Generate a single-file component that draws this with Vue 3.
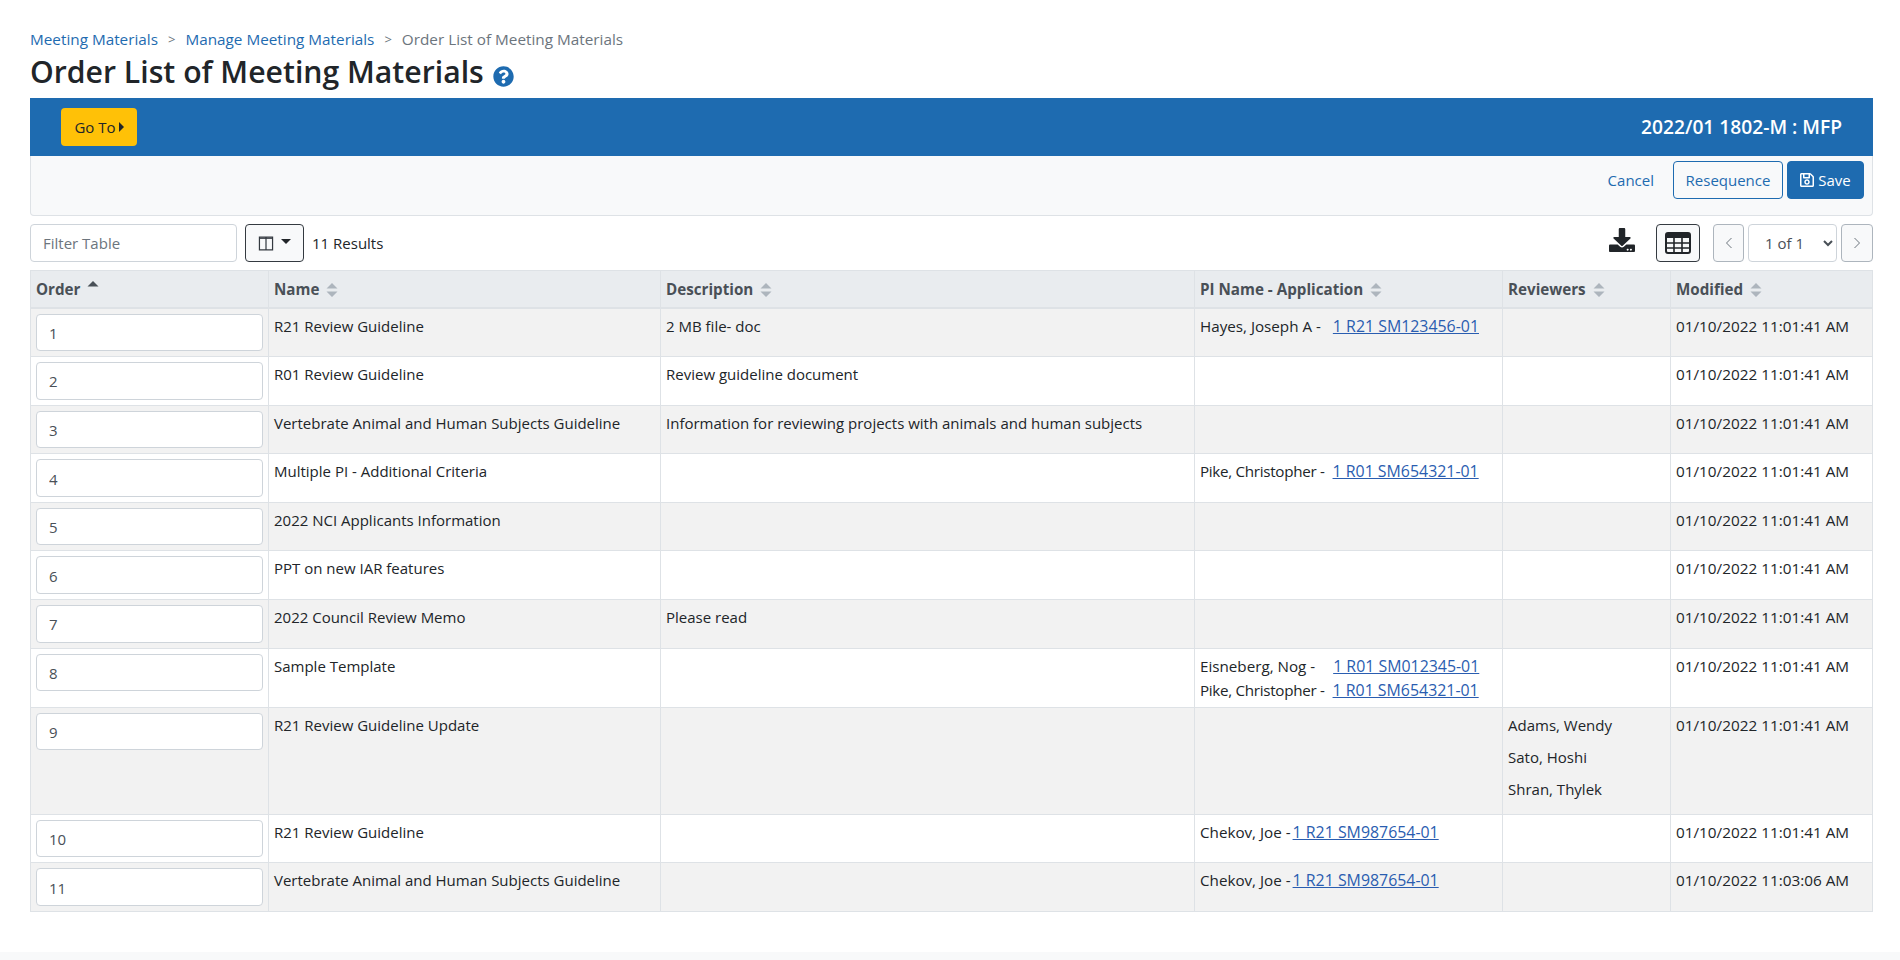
<script setup>
const columns = [
  { label: 'Order', sort: 'asc' },
  { label: 'Name' },
  { label: 'Description' },
  { label: 'PI Name - Application' },
  { label: 'Reviewers' },
  { label: 'Modified' }
]

const MOD = '01/10/2022 11:01:41 AM'

const rows = [
  { name: 'R21 Review Guideline', desc: '2 MB file- doc', pis: [{ pi: 'Hayes, Joseph A -', gap: 'wide', app: '1 R21 SM123456-01' }], modified: MOD },
  { name: 'R01 Review Guideline', desc: 'Review guideline document', modified: MOD },
  { name: 'Vertebrate Animal and Human Subjects Guideline', desc: 'Information for reviewing projects with animals and human subjects', modified: MOD },
  { name: 'Multiple PI - Additional Criteria', pis: [{ pi: 'Pike, Christopher -', gap: 'mid', app: '1 R01 SM654321-01' }], modified: MOD },
  { name: '2022 NCI Applicants Information', modified: MOD },
  { name: 'PPT on new IAR features', modified: MOD },
  { name: '2022 Council Review Memo', desc: 'Please read', modified: MOD },
  {
    name: 'Sample Template',
    pis: [
      { pi: 'Eisneberg, Nog -', gap: 'wider', app: '1 R01 SM012345-01' },
      { pi: 'Pike, Christopher -', gap: 'mid', app: '1 R01 SM654321-01' }
    ],
    modified: MOD
  },
  { name: 'R21 Review Guideline Update', reviewers: ['Adams, Wendy', 'Sato, Hoshi', 'Shran, Thylek'], modified: MOD },
  { name: 'R21 Review Guideline', pis: [{ pi: 'Chekov, Joe -', app: '1 R21 SM987654-01' }], modified: MOD },
  { name: 'Vertebrate Animal and Human Subjects Guideline', pis: [{ pi: 'Chekov, Joe -', app: '1 R21 SM987654-01' }], modified: '01/10/2022 11:03:06 AM' }
]
</script>

<template>
  <div class="page">
    <nav class="crumbs">
      <a href="#">Meeting Materials</a>
      <span class="sep">&gt;</span>
      <a href="#">Manage Meeting Materials</a>
      <span class="sep">&gt;</span>
      <span class="current">Order List of Meeting Materials</span>
    </nav>
    <h1 class="title">
      Order List of Meeting Materials
      <svg class="help" viewBox="0 0 512 512"><path fill="currentColor" d="M504 256c0 136.997-111.043 248-248 248S8 392.997 8 256C8 119.083 119.043 8 256 8s248 111.083 248 248zM262.655 90c-54.497 0-89.255 22.957-116.549 63.758-3.536 5.286-2.353 12.415 2.715 16.258l34.699 26.31c5.205 3.947 12.621 3.008 16.665-2.122 17.864-22.658 30.113-35.797 57.303-35.797 20.429 0 45.698 13.148 45.698 32.958 0 14.976-12.363 22.667-32.534 33.976C247.128 238.528 216 254.941 216 296v4c0 6.627 5.373 12 12 12h56c6.627 0 12-5.373 12-12v-1.333c0-28.462 83.186-29.647 83.186-106.667 0-58.002-60.165-102-116.531-102zM256 338c-25.365 0-46 20.635-46 46 0 25.364 20.635 46 46 46s46-20.636 46-46c0-25.365-20.635-46-46-46z"/></svg>
    </h1>

    <div class="banner">
      <button class="goto">Go To<span class="caret-right"></span></button>
      <div class="meeting">2022/01 1802-M : MFP</div>
    </div>

    <div class="actions">
      <a href="#" class="cancel">Cancel</a>
      <button class="btn-outline">Resequence</button>
      <button class="btn-save">
        <svg class="save-icon" viewBox="0 0 448 512"><path fill="currentColor" d="M433.941 129.941l-83.882-83.882A48 48 0 0 0 316.118 32H48C21.49 32 0 53.49 0 80v352c0 26.51 21.49 48 48 48h352c26.51 0 48-21.49 48-48V163.882a48 48 0 0 0-14.059-33.941zM272 80v80H144V80h128zm122 352H54a6 6 0 0 1-6-6V86a6 6 0 0 1 6-6h42v104c0 13.255 10.745 24 24 24h176c13.255 0 24-10.745 24-24V83.882l78.243 78.243a6 6 0 0 1 1.757 4.243V426a6 6 0 0 1-6 6zM224 232c-48.523 0-88 39.477-88 88s39.477 88 88 88 88-39.477 88-88-39.477-88-88-88zm0 128c-22.056 0-40-17.944-40-40s17.944-40 40-40 40 17.944 40 40-17.944 40-40 40z"/></svg>
        Save
      </button>
    </div>

    <div class="tools">
      <input class="filter" placeholder="Filter Table" />
      <button class="col-btn">
        <svg class="col-icon" viewBox="0 0 16 16"><path fill="none" stroke="currentColor" stroke-width="1.3" d="M1 1.200h14v13.600H1zM8 1.200v13.600"/><path fill="none" stroke="currentColor" stroke-width="1.300" d="M1 2.400h14"/></svg>
        <span class="caret-down"></span>
      </button>
      <span class="results">11 Results</span>
      <div class="tools-right">
        <svg class="download" viewBox="0 0 512 512" preserveAspectRatio="none"><path fill="currentColor" d="M216 0h80c13.3 0 24 10.7 24 24v168h87.7c17.8 0 26.7 21.5 14.1 34.1L269.7 378.3c-7.5 7.5-19.8 7.5-27.3 0L90.1 226.1c-12.6-12.6-3.7-34.1 14.1-34.1H192V24c0-13.3 10.7-24 24-24zm296 376v112c0 13.3-10.7 24-24 24H24c-13.3 0-24-10.7-24-24V376c0-13.3 10.7-24 24-24h146.7l49 49c20.1 20.1 52.5 20.1 72.6 0l49-49H488c13.3 0 24 10.7 24 24zm-124 88c0-11-9-20-20-20s-20 9-20 20 9 20 20 20 20-9 20-20zm64 0c0-11-9-20-20-20s-20 9-20 20 9 20 20 20 20-9 20-20z"/></svg>
        <button class="grid-btn">
          <svg class="grid-icon" viewBox="0 0 26 22">
            <rect x="1" y="1" width="24" height="20" rx="2" fill="none" stroke="currentColor" stroke-width="2"/>
            <path fill="currentColor" d="M1 1h24v5H1z"/>
            <path fill="none" stroke="currentColor" stroke-width="1.6" d="M1 11h24M1 16h24M9 5v16M17 5v16"/>
          </svg>
        </button>
        <div class="pager">
          <button class="page-btn">
            <svg class="chev" viewBox="0 0 8 12"><path fill="none" stroke="currentColor" d="M6.500 1L1.500 6l5 5"/></svg>
          </button>
          <select class="page-select"><option>1 of 1</option></select>
          <button class="page-btn">
            <svg class="chev" viewBox="0 0 8 12"><path fill="none" stroke="currentColor" d="M1.500 1l5 5-5 5"/></svg>
          </button>
        </div>
      </div>
    </div>

    <table class="materials">
      <colgroup>
        <col class="c-order" />
        <col class="c-name" />
        <col class="c-desc" />
        <col class="c-pi" />
        <col class="c-rev" />
        <col />
      </colgroup>
      <thead>
        <tr>
          <th v-for="col in columns" :key="col.label">
            {{ col.label }}
            <svg v-if="col.sort" class="sort asc" viewBox="0 0 14 16"><path fill="currentColor" d="M7 2l5.500 5.500h-11z"/></svg>
            <svg v-else class="sort" viewBox="0 0 14 16"><path fill="currentColor" d="M7 1l5.500 5.500h-11zM7 15L1.500 9.500h11z"/></svg>
          </th>
        </tr>
      </thead>
      <tbody>
        <tr v-for="(row, i) in rows" :key="i">
          <td class="order-cell"><input class="order-input" :value="i + 1" /></td>
          <td>{{ row.name }}</td>
          <td>{{ row.desc }}</td>
          <td>
            <div v-for="p in row.pis" :key="p.app" class="pi-line">
              <span :class="['pi', p.gap]">{{ p.pi }}</span><a href="#">{{ p.app }}</a>
            </div>
          </td>
          <td>
            <div v-for="r in row.reviewers" :key="r" class="reviewer">{{ r }}</div>
          </td>
          <td class="modified">{{ row.modified }}</td>
        </tr>
      </tbody>
    </table>
  </div>
  <div class="foot"></div>
</template>

<style scoped>
.page {
  box-sizing: border-box;
  font-family: "Open Sans", "Noto Sans", sans-serif;
  font-size: 15px;
  color: #212529;
  padding: 27px 27px 0 30px;
  height: 952px;
}

.crumbs {
  display: flex;
  align-items: center;
  height: 23px;
  font-size: 15.300px;
}

.crumbs a {
  color: #1e6bb0;
  text-decoration: none;
}

.sep {
  margin: 0 10px;
  color: #6c757d;
  font-size: 13px;
}

.current {
  color: #6c757d;
}

.title {
  box-sizing: border-box;
  margin: 0;
  height: 48px;
  padding-bottom: 6px;
  font-size: 30.200px;
  font-weight: 600;
  display: flex;
  align-items: center;
  gap: 9px;
}

.help {
  width: 21px;
  height: 21px;
  color: #1e6bb0;
  margin-top: 10px;
}

.banner {
  background: #1e6bb0;
  height: 58px;
  display: flex;
  align-items: center;
  justify-content: space-between;
  padding: 0 31px 2px 31px;
  box-sizing: border-box;
}

.goto {
  background: #ffc107;
  border: 0;
  border-radius: 4px;
  height: 38px;
  width: 76px;
  margin-top: 2px;
  color: #212529;
  font: inherit;
  display: flex;
  align-items: center;
  justify-content: center;
  gap: 3px;
}

.caret-right {
  border-left: 5px solid #212529;
  border-top: 5px solid transparent;
  border-bottom: 5px solid transparent;
}

.meeting {
  color: #fff;
  font-size: 19.200px;
  font-weight: 600;
}

.actions {
  box-sizing: border-box;
  background: #f8f9fa;
  border: 1px solid #dee2e6;
  border-top: 0;
  border-radius: 0 0 4px 4px;
  height: 60px;
  display: flex;
  align-items: center;
  justify-content: flex-end;
  padding: 0 8px 12px 0;
  gap: 4px;
}

.cancel {
  color: #1e6bb0;
  text-decoration: none;
  margin-right: 15px;
}

.btn-outline {
  width: 110px;
  height: 38px;
  background: transparent;
  border: 1px solid #1e6bb0;
  border-radius: 4px;
  color: #1e6bb0;
  font: inherit;
  padding: 0;
}

.btn-save {
  width: 77px;
  height: 38px;
  background: #1e6bb0;
  border: 1px solid #1e6bb0;
  border-radius: 4px;
  color: #fff;
  font: inherit;
  padding: 0;
  display: flex;
  align-items: center;
  justify-content: center;
  gap: 4px;
}

.save-icon {
  width: 14px;
  height: 16px;
}

.tools {
  display: flex;
  align-items: center;
  height: 38px;
  margin-top: 8px;
  margin-bottom: 8px;
}

.filter {
  width: 207px;
  height: 38px;
  box-sizing: border-box;
  border: 1px solid #ced4da;
  border-radius: 4px;
  padding: 0 12px;
  font: inherit;
  outline: 0;
}

.filter::placeholder {
  color: #6c757d;
}

.col-btn {
  margin-left: 8px;
  width: 59px;
  height: 38px;
  background: #f8f9fa;
  border: 1px solid #343a40;
  border-radius: 4px;
  color: #343a40;
  display: flex;
  align-items: center;
  justify-content: center;
  gap: 7px;
  padding: 0;
}

.col-icon {
  width: 16px;
  height: 15px;
}

.caret-down {
  border-top: 5px solid #212529;
  border-left: 5px solid transparent;
  border-right: 5px solid transparent;
  margin-top: -3px;
}

.results {
  margin-left: 8px;
}

.tools-right {
  margin-left: auto;
  display: flex;
  align-items: center;
}

.download {
  width: 26px;
  height: 24px;
  color: #212529;
  margin-top: -6px;
}

.grid-btn {
  margin-left: 21px;
  width: 44px;
  height: 38px;
  background: #f8f9fa;
  border: 1px solid #343a40;
  border-radius: 4px;
  color: #212529;
  padding: 0;
  display: flex;
  align-items: center;
  justify-content: center;
}

.grid-icon {
  width: 26px;
  height: 22px;
}

.pager {
  margin-left: 13px;
  display: flex;
  gap: 4px;
}

.page-btn {
  width: 31px;
  height: 38px;
  background: #f8f9fa;
  border: 1px solid #adb5bd;
  border-radius: 4px;
  color: #6c757d;
  padding: 0;
  display: flex;
  align-items: center;
  justify-content: center;
}

.page-btn:last-child {
  width: 32px;
}

.chev {
  width: 8px;
  height: 12px;
}

.page-select {
  width: 89px;
  height: 38px;
  border: 1px solid #ced4da;
  border-radius: 4px;
  background: #fff;
  color: #495057;
  font: inherit;
  padding-left: 12px;
}

.materials {
  width: 100%;
  table-layout: fixed;
  border-collapse: collapse;
}

.c-order { width: 238px; }
.c-name { width: 392px; }
.c-desc { width: 534px; }
.c-pi { width: 308px; }
.c-rev { width: 168px; }

th, td {
  border: 1px solid #dee2e6;
  padding: 5px;
  line-height: 24px;
  text-align: left;
  vertical-align: top;
}

th {
  box-sizing: border-box;
  background: #e9ecef;
  color: #495057;
  font-size: 15.200px;
  font-weight: 700;
  border-bottom-width: 2px;
  white-space: nowrap;
  height: 37px;
  padding: 6px 5px 3px;
}

tbody tr:nth-child(odd) {
  background: #f2f2f2;
}

.sort {
  width: 14px;
  height: 16px;
  color: #adb5bd;
  vertical-align: -3px;
  margin-left: 2px;
}

.sort.asc {
  color: #495057;
  vertical-align: 0;
}

.order-input {
  display: block;
  box-sizing: border-box;
  width: 100%;
  height: 37.600px;
  border: 1px solid #ced4da;
  border-radius: 4px;
  padding: 1px 12px 0;
  font: inherit;
  color: #495057;
  background: #fff;
  outline: 0;
}

.pi {
  font-size: 15.200px;
  margin-right: 2px;
}

.pi.wide { margin-right: 12px; }
.pi.mid { margin-right: 8px; letter-spacing: -0.3px; }
.pi.wider { margin-right: 18px; }

.pi-line a {
  font-size: 15.900px;
  color: #2a5db0;
  text-decoration: underline;
}

.reviewer {
  margin-bottom: 8px;
}

.modified {
  font-size: 15.300px;
}

.foot {
  height: 8px;
  background: #f8f9fa;
}
</style>

<style>
html, body {
  overflow: hidden;
  background: #fff;
}
</style>
